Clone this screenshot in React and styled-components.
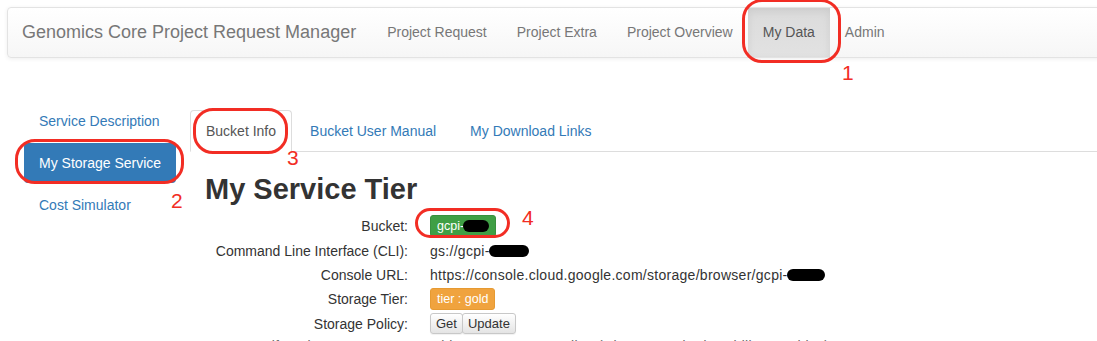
import React from 'react'
import styled, { createGlobalStyle, css } from 'styled-components'

const GlobalStyle = createGlobalStyle`
  html, body {
    margin: 0;
    padding: 0;
    background: #fff;
    overflow: hidden;
  }
  body {
    font-family: "Liberation Sans", Arial, sans-serif;
    font-size: 14px;
    color: #333;
  }
`

const Page = styled.div`
  position: relative;
  width: 1097px;
  height: 341px;
  overflow: hidden;
`

const Navbar = styled.div`
  display: flex;
  align-items: stretch;
  margin: 7px 0 0 7px;
  width: 1120px;
  height: 49px;
  border: 1px solid #e3e3e3;
  border-radius: 4px;
  background: linear-gradient(to bottom, #ffffff 0%, #f6f6f6 100%);
  box-shadow: inset 0 1px 0 rgba(255, 255, 255, 0.15), 0 1px 4px rgba(0, 0, 0, 0.07);
`

const Brand = styled.div`
  padding: 0 16px 0 14px;
  font-size: 18px;
  line-height: 49px;
  color: #777;
`

const NavItem = styled.div`
  padding: 0 15px;
  line-height: 49px;
  color: #777;
  ${p => p.$active && css`
    color: #555;
    background: linear-gradient(to bottom, #dbdbdb 0%, #e2e2e2 100%);
    box-shadow: inset 0 3px 9px rgba(0, 0, 0, 0.075);
  `}
`

const Body = styled.div`
  display: flex;
  align-items: flex-start;
  margin-top: 43px;
`

const SideNav = styled.div`
  display: flex;
  flex-direction: column;
  gap: 2px;
  width: 152px;
  margin-left: 24px;
`

const Pill = styled.div`
  padding: 10px 15px;
  line-height: 20px;
  border-radius: 4px;
  white-space: nowrap;
  color: #337ab7;
  ${p => p.$active && css`
    color: #fff;
    background: #337ab7;
  `}
`

const Main = styled.div`
  flex: 1;
  margin-left: 14px;
  margin-top: 9px;
`

const Tabs = styled.div`
  display: flex;
  gap: 2px;
  border-bottom: 1px solid #ddd;
`

const Tab = styled.div`
  padding: 10px 15px;
  line-height: 20px;
  margin-bottom: -1px;
  border: 1px solid transparent;
  border-radius: 4px 4px 0 0;
  color: #337ab7;
  ${p => p.$active && css`
    color: #555;
    background: #fff;
    border-color: #ddd #ddd transparent;
  `}
`

const Content = styled.div`
  padding-left: 15px;
`

const Title = styled.h1`
  margin: 18px 0 6px;
  font-size: 29px;
  font-weight: bold;
  line-height: 38px;
  color: #333;
`

const Details = styled.div`
  display: grid;
  grid-template-columns: 203px 1fr;
  column-gap: 22px;
  grid-template-rows: repeat(5, 24.4px) 20px;
  align-items: center;
`

const Term = styled.div`
  text-align: right;
  white-space: nowrap;
`

const Value = styled.div`
  display: flex;
  align-items: center;
  white-space: nowrap;
  letter-spacing: 0.28px;
`

const Badge = styled.span`
  display: inline-flex;
  align-items: center;
  height: 20px;
  padding: 0 6px;
  border-radius: 3px;
  font-size: 12.5px;
  letter-spacing: 0;
  color: #fff;
  background: ${p => p.$tone === 'gold' ? '#f0a33e' : '#3f9f45'};
  border: 1px solid ${p => p.$tone === 'gold' ? '#e69a32' : '#39903e'};
`

const Redact = styled.span`
  display: inline-block;
  width: ${p => p.$w}px;
  height: ${p => p.$h || 12}px;
  border-radius: 7px;
  background: #000;
  margin-left: -1px;
`

const BtnGroup = styled.div`
  display: flex;
`

const Btn = styled.button`
  height: 21px;
  padding: 0 5px;
  font-family: inherit;
  font-size: 13px;
  letter-spacing: 0;
  color: #333;
  background: linear-gradient(to bottom, #ffffff 0%, #e4e4e4 100%);
  border: 1px solid #c8c8c8;
  border-radius: 3px;
  box-shadow: 0 1px 1px rgba(0, 0, 0, 0.06);
  & + & {
    margin-left: -1px;
  }
`

const Faded = styled.span`
  color: #666;
`

const Mark = styled.div`
  position: absolute;
  border: 3px solid #f22d24;
  border-radius: ${p => p.$r}px;
  box-sizing: border-box;
`

const Num = styled.div`
  position: absolute;
  font-size: 21px;
  line-height: 21px;
  color: #f22d24;
`

export default function App() {
  return (
    <Page>
      <GlobalStyle />
      <Navbar>
        <Brand>Genomics Core Project Request Manager</Brand>
        <NavItem>Project Request</NavItem>
        <NavItem>Project Extra</NavItem>
        <NavItem>Project Overview</NavItem>
        <NavItem $active>My Data</NavItem>
        <NavItem>Admin</NavItem>
      </Navbar>

      <Body>
        <SideNav>
          <Pill>Service Description</Pill>
          <Pill $active>My Storage Service</Pill>
          <Pill>Cost Simulator</Pill>
        </SideNav>

        <Main>
          <Tabs>
            <Tab $active>Bucket Info</Tab>
            <Tab>Bucket User Manual</Tab>
            <Tab>My Download Links</Tab>
          </Tabs>
          <Content>
            <Title>My Service Tier</Title>
            <Details>
              <Term>Bucket:</Term>
              <Value>
                <Badge>gcpi-<Redact $w={26} $h={12} /></Badge>
              </Value>
              <Term>Command Line Interface (CLI):</Term>
              <Value>gs://gcpi-<Redact $w={40} /></Value>
              <Term>Console URL:</Term>
              <Value>https://console.cloud.google.com/storage/browser/gcpi-<Redact $w={38} /></Value>
              <Term>Storage Tier:</Term>
              <Value><Badge $tone="gold">tier : gold</Badge></Value>
              <Term>Storage Policy:</Term>
              <Value>
                <BtnGroup>
                  <Btn>Get</Btn>
                  <Btn>Update</Btn>
                </BtnGroup>
              </Value>
              <Term><Faded>Lifecycle Management:</Faded></Term>
              <Value><Faded>Objects move to Nearline (Class: Standard, Coldline, Archive)</Faded></Value>
            </Details>
          </Content>
        </Main>
      </Body>

      <Mark $r={20} style={{ left: 742, top: -1, width: 99, height: 64 }} />
      <Num style={{ left: 842, top: 62 }}>1</Num>
      <Mark $r={20} style={{ left: 15, top: 139, width: 169, height: 45 }} />
      <Num style={{ left: 171, top: 190 }}>2</Num>
      <Mark $r={20} style={{ left: 193, top: 108, width: 95, height: 46 }} />
      <Num style={{ left: 287, top: 147 }}>3</Num>
      <Mark $r={15} style={{ left: 415, top: 208, width: 95, height: 30 }} />
      <Num style={{ left: 522, top: 207 }}>4</Num>
    </Page>
  )
}
